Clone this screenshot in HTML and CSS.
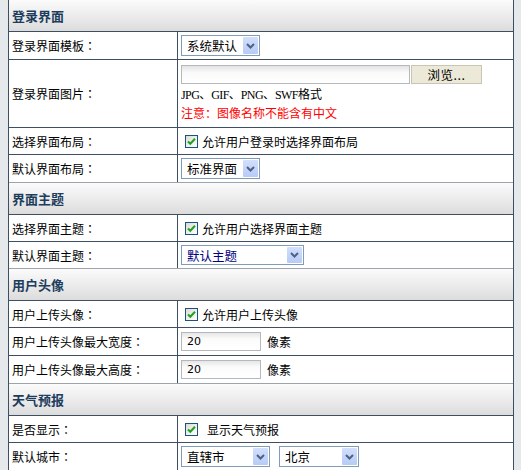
FILE: index.html
```html
<!DOCTYPE html>
<html lang="zh-CN">
<head>
<meta charset="utf-8">
<title>界面设置</title>
<link rel="stylesheet" href="styles.css">
</head>
<body>
<div class="panel">
  <div class="sec">登录界面</div>
  <div class="row h27">
    <div class="lbl">登录界面模板<span class="cl">：</span></div>
    <div class="val">
      <span class="sel w79"><span class="stxt">系统默认</span><span class="sbtn"><svg width="9" height="6" viewBox="0 0 9 6"><path d="M1 1 L4.5 4.5 L8 1" fill="none" stroke="#4d6185" stroke-width="2"/></svg></span></span>
    </div>
  </div>
  <div class="row himg">
    <div class="lbl">登录界面图片<span class="cl">：</span></div>
    <div class="val col">
      <div class="file"><span class="ftxt"></span><span class="fbtn">浏览...</span></div>
      <div class="line"><span class="lat">JPG</span>、<span class="lat">GIF</span>、<span class="lat">PNG</span>、<span class="lat">SWF</span>格式</div>
      <div class="line red">注意<span class="cl">：</span>图像名称不能含有中文</div>
    </div>
  </div>
  <div class="row h26">
    <div class="lbl">选择界面布局<span class="cl">：</span></div>
    <div class="val"><span class="cb"><svg width="11" height="11" viewBox="0 0 11 11"><path d="M2 5.5 L4.3 7.8 L9 2.8" fill="none" stroke="#21a121" stroke-width="2"/></svg></span><span class="cbt">允许用户登录时选择界面布局</span></div>
  </div>
  <div class="row h27 pre">
    <div class="lbl">默认界面布局<span class="cl">：</span></div>
    <div class="val">
      <span class="sel w79"><span class="stxt">标准界面</span><span class="sbtn"><svg width="9" height="6" viewBox="0 0 9 6"><path d="M1 1 L4.5 4.5 L8 1" fill="none" stroke="#4d6185" stroke-width="2"/></svg></span></span>
    </div>
  </div>

  <div class="sec">界面主题</div>
  <div class="row h26">
    <div class="lbl">选择界面主题<span class="cl">：</span></div>
    <div class="val"><span class="cb"><svg width="11" height="11" viewBox="0 0 11 11"><path d="M2 5.5 L4.3 7.8 L9 2.8" fill="none" stroke="#21a121" stroke-width="2"/></svg></span><span class="cbt">允许用户选择界面主题</span></div>
  </div>
  <div class="row h26 pre">
    <div class="lbl">默认界面主题<span class="cl">：</span></div>
    <div class="val">
      <span class="sel w123 navy"><span class="stxt">默认主题</span><span class="sbtn"><svg width="9" height="6" viewBox="0 0 9 6"><path d="M1 1 L4.5 4.5 L8 1" fill="none" stroke="#4d6185" stroke-width="2"/></svg></span></span>
    </div>
  </div>

  <div class="sec">用户头像</div>
  <div class="row h26">
    <div class="lbl">用户上传头像<span class="cl">：</span></div>
    <div class="val"><span class="cb"><svg width="11" height="11" viewBox="0 0 11 11"><path d="M2 5.5 L4.3 7.8 L9 2.8" fill="none" stroke="#21a121" stroke-width="2"/></svg></span><span class="cbt">允许用户上传头像</span></div>
  </div>
  <div class="row h27">
    <div class="lbl">用户上传头像最大宽度<span class="cl">：</span></div>
    <div class="val"><span class="inp">20</span><span class="unit">像素</span></div>
  </div>
  <div class="row h27 pre">
    <div class="lbl">用户上传头像最大高度<span class="cl">：</span></div>
    <div class="val"><span class="inp">20</span><span class="unit">像素</span></div>
  </div>

  <div class="sec">天气预报</div>
  <div class="row h26">
    <div class="lbl">是否显示<span class="cl">：</span></div>
    <div class="val"><span class="cb"><svg width="11" height="11" viewBox="0 0 11 11"><path d="M2 5.5 L4.3 7.8 L9 2.8" fill="none" stroke="#21a121" stroke-width="2"/></svg></span><span class="cbt wide">显示天气预报</span></div>
  </div>
  <div class="row h27">
    <div class="lbl">默认城市<span class="cl">：</span></div>
    <div class="val">
      <span class="sel w89"><span class="stxt">直辖市</span><span class="sbtn"><svg width="9" height="6" viewBox="0 0 9 6"><path d="M1 1 L4.5 4.5 L8 1" fill="none" stroke="#4d6185" stroke-width="2"/></svg></span></span>
      <span class="sel w80 gap"><span class="stxt">北京</span><span class="sbtn"><svg width="9" height="6" viewBox="0 0 9 6"><path d="M1 1 L4.5 4.5 L8 1" fill="none" stroke="#4d6185" stroke-width="2"/></svg></span></span>
    </div>
  </div>
</div>
</body>
</html>
```

FILE: styles.css
```css
html, body {
  margin: 0;
  padding: 0;
}
body {
  background: #e6e9ec;
  font-family: "Noto Sans CJK SC", "Liberation Sans", sans-serif;
  font-size: 12px;
  color: #000;
  height: 470px;
  overflow: hidden;
}
.panel {
  margin-left: 8px;
  width: 506px;
  box-sizing: border-box;
  border-left: 1px solid #3f4f63;
  border-right: 1px solid #3f4f63;
  background: #fff;
}
.sec {
  height: 31px;
  border-bottom: 1px solid #3f4f63;
  background: linear-gradient(#fbfbfb, #e9e9e9 60%, #dcdcdc);
  display: flex;
  align-items: center;
  padding-left: 3px;
  font-size: 13px;
  font-weight: bold;
  color: #1d3d5d;
}
.row {
  display: grid;
  grid-template-columns: 169px 1fr;
  border-bottom: 1px solid #3f4f63;
}
.row.pre {
  border-bottom-color: #9fa4aa;
}
.h26 { height: 26px; }
.h27 { height: 27px; }
.himg { height: 67px; }
.lbl {
  border-right: 1px solid #3f4f63;
  display: flex;
  align-items: center;
  padding-left: 3px;
  white-space: nowrap;
}
.cl {
  font-family: "Noto Sans CJK TC", "Noto Sans CJK SC", sans-serif;
}
.val {
  display: flex;
  align-items: center;
  padding-left: 3px;
}
.val.col {
  flex-direction: column;
  align-items: flex-start;
  padding-top: 5px;
}
.sel {
  box-sizing: border-box;
  height: 21px;
  border: 1px solid #7f9db9;
  background: #fff;
  display: flex;
  align-items: stretch;
}
.w79 { width: 79px; }
.w123 { width: 123px; height: 20px; }
.w89 { width: 89px; }
.w80 { width: 80px; }
.gap { margin-left: 9px; }
.stxt {
  flex: 1;
  padding-left: 5px;
  display: flex;
  align-items: center;
  font-size: 12.5px;
}
.navy .stxt { color: #000080; }
.sbtn {
  width: 15px;
  margin: 1px;
  border-radius: 1px;
  background: linear-gradient(#d2dffd, #b7cbf5);
  display: flex;
  align-items: center;
  justify-content: center;
}
.file {
  display: flex;
  height: 19px;
}
.ftxt {
  box-sizing: border-box;
  width: 229px;
  height: 19px;
  border: 1px solid #b5b8bc;
  background: linear-gradient(#e3e3e3, #fafafa 40%, #fff);
}
.fbtn {
  box-sizing: border-box;
  width: 71px;
  height: 19px;
  margin-left: 1px;
  border: 1px solid #c8c5b4;
  background: #ece9d8;
  display: flex;
  align-items: center;
  justify-content: center;
  font-size: 12.5px;
  letter-spacing: 0.5px;
}
.line {
  height: 19px;
  line-height: 19px;
  white-space: nowrap;
}
.lat {
  font-family: "Liberation Serif", serif;
  font-size: 12px;
  letter-spacing: -0.6px;
}
.red { color: #f00; }
.cb {
  box-sizing: border-box;
  width: 13px;
  height: 13px;
  margin-left: 4px;
  border: 1px solid #1c5180;
  background: linear-gradient(135deg, #dcdcd6, #fff);
  display: flex;
  align-items: center;
  justify-content: center;
}
.cbt {
  margin-left: 4px;
}
.cbt.wide { margin-left: 9px; }
.inp {
  box-sizing: border-box;
  width: 80px;
  height: 19px;
  border: 1px solid #b5b8bc;
  background: linear-gradient(#e6e6e6, #fbfbfb 35%, #fff);
  padding-left: 5px;
  display: flex;
  align-items: center;
  font-family: "DejaVu Sans", sans-serif;
  font-size: 11px;
}
.unit {
  margin-left: 6px;
}
```
